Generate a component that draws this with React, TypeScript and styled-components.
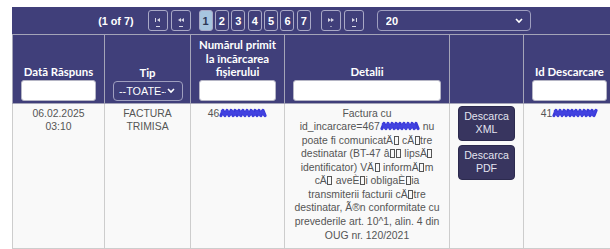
import React from "react";
import styled, { createGlobalStyle } from "styled-components";

const Global = createGlobalStyle`
  html, body { margin: 0; padding: 0; background: #fff; overflow: hidden; }
  body { font-family: "Liberation Sans", Arial, sans-serif; }
`;

const NAVY = "#403f7a";
const BODY_FONT = `10.4px "Liberation Sans", Arial, sans-serif`;

const Wrap = styled.div`
  padding: 7px 0 0 12px;
  width: 603px;
`;

const Paginator = styled.div`
  box-sizing: border-box;
  height: 27px;
  background: ${NAVY};
  display: flex;
  align-items: center;
  justify-content: center;
  padding-left: 2px;
`;

const Current = styled.span`
  color: #fff;
  font: bold 10.8px "Liberation Sans", Arial, sans-serif;
  margin-right: 14px;
`;

const Group = styled.div<{ $gap: number; $mr?: number }>`
  display: flex;
  gap: ${(p) => p.$gap}px;
  margin-right: ${(p) => p.$mr ?? 0}px;
`;

const NavBtn = styled.button`
  box-sizing: border-box;
  width: 20px;
  height: 21px;
  padding: 0;
  background: ${NAVY};
  border: 1px solid #a9a9c6;
  border-radius: 3px;
  display: flex;
  align-items: center;
  justify-content: center;
`;

const PageBtn = styled.button<{ $active?: boolean }>`
  box-sizing: border-box;
  width: 14px;
  height: 21px;
  padding: 0;
  border: 1px solid #a9a9c6;
  border-radius: 3px;
  background: ${(p) => (p.$active ? "#a7c5df" : NAVY)};
  color: ${(p) => (p.$active ? "#2c3856" : "#fff")};
  font: bold 11px "Liberation Sans", Arial, sans-serif;
  display: flex;
  align-items: center;
  justify-content: center;
`;

const SelectWrap = styled.div<{ $w: number; $h: number }>`
  position: relative;
  width: ${(p) => p.$w}px;
  height: ${(p) => p.$h}px;
`;

const NativeSelect = styled.select<{ $bold?: boolean }>`
  appearance: none;
  -webkit-appearance: none;
  box-sizing: border-box;
  width: 100%;
  height: 100%;
  margin: 0;
  background: ${NAVY};
  color: #fff;
  border: 1px solid #9f9fbf;
  border-radius: 4px;
  padding: 0 ${(p) => (p.$bold ? 20 : 16)}px 0 ${(p) => (p.$bold ? 8 : 5)}px;
  font: ${(p) => (p.$bold ? "bold 11px" : "normal 10.8px")} "Liberation Sans", Arial, sans-serif;
  outline: none;
`;

const Chevron = styled.svg`
  position: absolute;
  right: 8px;
  top: 50%;
  margin-top: -3px;
  pointer-events: none;
`;

const Table = styled.table`
  border-collapse: collapse;
  table-layout: fixed;
  width: 603px;
`;

const Th = styled.th`
  background: ${NAVY};
  color: #fff;
  font: bold 11.4px Lato, "Liberation Sans", sans-serif;
  line-height: 13.5px;
  border: 1px solid #a4a4b8;
  padding: 3px 8px 2px;
  vertical-align: bottom;
  text-align: center;
`;

const Label = styled.div`
  margin-bottom: 1px;
`;

const FilterInput = styled.input`
  display: block;
  box-sizing: border-box;
  width: 100%;
  height: 21px;
  margin: 0;
  border: 1px solid #b5b5c5;
  border-radius: 3px;
  background: #fff;
`;

const Td = styled.td<{ $pt?: number }>`
  background: #f9f9f9;
  color: #555;
  font: ${BODY_FONT};
  line-height: 13.56px;
  border: 1px solid #cdcdcd;
  padding: ${(p) => p.$pt ?? 3}px 8px 6px;
  vertical-align: top;
  text-align: center;
`;

const DetailsTd = styled(Td)`
  padding-left: 6px;
  padding-right: 6px;
`;

const NoWrap = styled.span`
  white-space: nowrap;
`;

const Tofu = styled.span`
  display: inline-block;
  box-sizing: border-box;
  width: 5px;
  height: 9px;
  border: 1px solid currentColor;
  margin: 0 0.5px;
  vertical-align: -1px;
`;

const ScribbleSvg = styled.svg`
  vertical-align: -2px;
`;

const DownloadBtn = styled.button`
  display: block;
  box-sizing: border-box;
  width: 100%;
  margin: 0 0 4px;
  padding: 3px 0;
  background: #38355f;
  color: #e4e4f0;
  border: 1px solid #2c2a4e;
  border-radius: 4px;
  font: 10.6px "Liberation Sans", Arial, sans-serif;
  line-height: 13.56px;
`;

/* redaction marker drawn over the hidden digits */
const Scribble = ({ w }: { w: number }) => {
  const a: string[] = [];
  for (let x = 2, i = 0; x < w - 1; x += 2, i++) {
    a.push(`${x},${i % 2 ? 3.5 : 8.5}`);
  }
  const b: string[] = [];
  for (let x = 3, i = 0; x < w - 2; x += 2.5, i++) {
    b.push(`${x},${i % 2 ? 8 : 4}`);
  }
  return (
    <ScribbleSvg width={w} height={12} viewBox={`0 0 ${w} 12`}>
      <polyline points={a.join(" ")} fill="none" stroke="#3a3ad8" strokeWidth={3.2} strokeLinejoin="round" strokeLinecap="round" />
      <polyline points={b.join(" ")} fill="none" stroke="#4242e0" strokeWidth={2.6} strokeLinejoin="round" strokeLinecap="round" />
    </ScribbleSvg>
  );
};

/* A word holding undisplayable bytes, kept on one line */
const W = ({ parts }: { parts: string[] }) => (
  <NoWrap>
    {parts.map((p, i) => (
      <React.Fragment key={i}>
        {i > 0 && <Tofu />}
        {p}
      </React.Fragment>
    ))}
  </NoWrap>
);

const IconFirst = () => (
  <svg width="10" height="14" viewBox="0 0 10 14">
    <rect x="2" y="4" width="1" height="4" fill="#d8d8e6" />
    <path d="M7 4 L4 6 L7 8 Z" fill="#d8d8e6" />
    <rect x="3" y="12" width="4" height="1" fill="#d8d8e6" />
  </svg>
);
const IconPrev = () => (
  <svg width="10" height="14" viewBox="0 0 10 14">
    <path d="M5 4 L2 6 L5 8 Z M8 4 L5 6 L8 8 Z" fill="#d8d8e6" />
    <rect x="3" y="12" width="4" height="1" fill="#d8d8e6" />
  </svg>
);
const IconNext = () => (
  <svg width="10" height="14" viewBox="0 0 10 14">
    <path d="M2 4 L5 6 L2 8 Z M5 4 L8 6 L5 8 Z" fill="#d8d8e6" />
    <rect x="4" y="12" width="2" height="1" fill="#9a9ab6" />
  </svg>
);
const IconLast = () => (
  <svg width="10" height="14" viewBox="0 0 10 14">
    <path d="M3 4 L6 6 L3 8 Z" fill="#d8d8e6" />
    <rect x="7" y="4" width="1" height="4" fill="#d8d8e6" />
    <rect x="3" y="12" width="4" height="1" fill="#d8d8e6" />
  </svg>
);

const ChevronIcon = () => (
  <Chevron width="8" height="6" viewBox="0 0 8 6">
    <path d="M1 1 L4 4 L7 1" fill="none" stroke="#fff" strokeWidth="1.6" />
  </Chevron>
);

export default function App() {
  return (
    <>
      <Global />
      <Wrap>
        <Paginator>
          <Current>(1 of 7)</Current>
          <Group $gap={3} $mr={8}>
            <NavBtn aria-label="first"><IconFirst /></NavBtn>
            <NavBtn aria-label="prev"><IconPrev /></NavBtn>
          </Group>
          <Group $gap={2.4} $mr={10}>
            {[1, 2, 3, 4, 5, 6, 7].map((n) => (
              <PageBtn key={n} $active={n === 1}>{n}</PageBtn>
            ))}
          </Group>
          <Group $gap={3} $mr={13}>
            <NavBtn aria-label="next"><IconNext /></NavBtn>
            <NavBtn aria-label="last"><IconLast /></NavBtn>
          </Group>
          <SelectWrap $w={154} $h={21}>
            <NativeSelect $bold defaultValue="20">
              <option>10</option>
              <option>20</option>
              <option>50</option>
            </NativeSelect>
            <ChevronIcon />
          </SelectWrap>
        </Paginator>
        <Table>
          <colgroup>
            <col style={{ width: 92 }} />
            <col style={{ width: 86 }} />
            <col style={{ width: 94 }} />
            <col style={{ width: 165 }} />
            <col style={{ width: 74 }} />
            <col style={{ width: 92 }} />
          </colgroup>
          <thead>
            <tr>
              <Th>
                <Label>Dată Răspuns</Label>
                <FilterInput />
              </Th>
              <Th>
                <Label>Tip</Label>
                <SelectWrap $w={70} $h={20}>
                  <NativeSelect defaultValue="--TOATE--">
                    <option>--TOATE--</option>
                  </NativeSelect>
                  <ChevronIcon />
                </SelectWrap>
              </Th>
              <Th>
                <Label>Numărul primit la încărcarea fișierului</Label>
                <FilterInput />
              </Th>
              <Th>
                <Label>Detalii</Label>
                <FilterInput />
              </Th>
              <Th />
              <Th>
                <Label>Id Descarcare</Label>
                <FilterInput />
              </Th>
            </tr>
          </thead>
          <tbody>
            <tr>
              <Td>06.02.2025 03:10</Td>
              <Td>FACTURA TRIMISA</Td>
              <Td>
                <NoWrap>
                  46<Scribble w={48} />
                </NoWrap>
              </Td>
              <DetailsTd>
                Factura cu
                <br />
                <NoWrap>
                  id_incarcare=467<Scribble w={40} />
                </NoWrap>{" "}
                nu
                <br />
                poate fi <W parts={["comunicatÄ", ""]} /> <W parts={["cÄ", "tre"]} />
                <br />
                destinatar (BT-47 <W parts={["â", "", ""]} /> <W parts={["lipsÄ", ""]} />
                <br />
                identificator) <W parts={["VÄ", ""]} /> <W parts={["informÄ", "m"]} />
                <br />
                <W parts={["cÄ", ""]} /> <W parts={["aveÈ", "i"]} /> <W parts={["obligaÈ", "ia"]} />
                <br />
                transmiterii facturii <W parts={["cÄ", "tre"]} />
                <br />
                destinatar, Ã®n conformitate cu
                <br />
                prevederile art. 10^1, alin. 4 din
                <br />
                OUG nr. 120/2021
              </DetailsTd>
              <Td $pt={2}>
                <DownloadBtn>Descarca XML</DownloadBtn>
                <DownloadBtn>Descarca PDF</DownloadBtn>
              </Td>
              <Td>
                <NoWrap>
                  41<Scribble w={46} />
                </NoWrap>
              </Td>
            </tr>
          </tbody>
        </Table>
      </Wrap>
    </>
  );
}
